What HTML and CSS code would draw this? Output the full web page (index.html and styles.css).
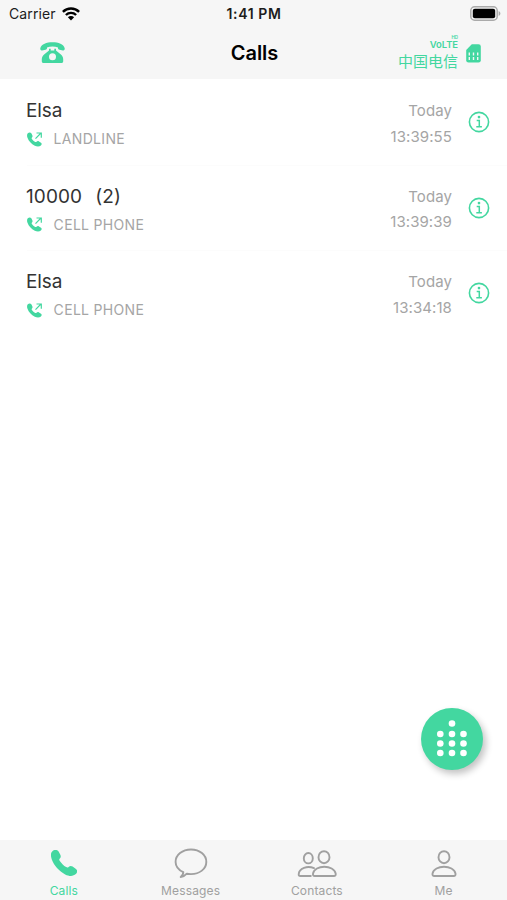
FILE: index.html
```html
<!DOCTYPE html>
<html lang="en">
<head>
<meta charset="utf-8">
<title>Calls</title>
<link rel="stylesheet" href="styles.css">
</head>
<body>
<svg class="defs" width="0" height="0" aria-hidden="true">
  <symbol id="handset" viewBox="0 0 26 26">
    <path d="M1.200 1.400C3-.3 6-.4 7.600 1.500L9.200 4.400C10.100 6.300 9.900 7.700 8.600 8.800C8 9.400 8.200 10.100 8.800 11C10.700 13.600 12.700 15.600 15.100 17.100C16.100 17.700 16.900 17.700 17.600 17C18.800 15.900 20.200 15.800 21.600 16.600L25 19C26.700 20.300 26.400 22.500 24.800 24.100C22.200 26.500 18.200 26.400 14.200 24.400C8 21 3.100 15.900.8 9.600C-.4 6-.5 3.100 1.200 1.400Z"/>
  </symbol>
  <symbol id="outgoing" viewBox="0 0 16 15">
    <path d="M.8 1.300C2 .2 3.700.3 4.500 1.500L5.300 3.200C5.800 4.300 5.500 5.100 4.800 5.800C4.500 6.100 4.600 6.500 4.900 7C5.800 8.300 6.900 9.200 8.200 9.900C8.700 10.200 9.100 10.100 9.500 9.700C10.200 9 11.200 8.900 12 9.400L14 10.700C15 11.400 14.800 12.600 13.900 13.400C12.400 14.900 10 14.800 7.800 13.700C4.300 11.900 1.700 9 .5 5.700C-.1 4-.2 2.300.8 1.300Z"/>
    <path d="M8.500 6.600 14 1M9.500 1h4.800v4.700" fill="none" stroke="currentColor" stroke-width="1.200"/>
  </symbol>
  <symbol id="info" viewBox="0 0 22 22">
    <circle cx="11" cy="11" r="9.600" fill="none" stroke="currentColor" stroke-width="1.600"/>
    <circle cx="11" cy="6.100" r="1.350"/>
    <path d="M8.700 9.600h2.600v6M8.300 15.800h5.600" fill="none" stroke="currentColor" stroke-width="1.500"/>
  </symbol>
</svg>

<header class="top">
  <div class="status">
    <div class="carrier">Carrier
      <svg width="18" height="14" viewBox="0 0 18 14"><g fill="none" stroke="#000" stroke-width="2.400"><path d="M.9 4.900a11.500 11.500 0 0 1 16.200 0"/><path d="M3.900 8a7.200 7.200 0 0 1 10.200 0"/></g><path d="M5.900 10.200a4.400 4.400 0 0 1 6.200 0L9 13.400Z"/></svg>
    </div>
    <div class="clock">1:41 PM</div>
    <svg class="battery" width="31" height="15" viewBox="0 0 31 15"><rect x=".8" y=".8" width="26.400" height="13.400" rx="3.800" fill="#f7f7f7" stroke="#aaa" stroke-width="1.500"/><rect x="2.800" y="2.800" width="22.400" height="9.400" rx="2" fill="#000"/><path d="M28.600 5v5c1-.4 1.800-1.400 1.800-2.500S29.600 5.400 28.600 5Z" fill="#aaa"/></svg>
  </div>
  <div class="nav">
    <svg class="phone" width="25" height="22" viewBox="0 0 25 22"><path d="M.3 6.200C1.400 2.300 6.500.3 12.500.3S23.600 2.300 24.700 6.200C24.900 7.600 24.300 8.500 23 8.400L19.500 7.700C18.300 7.400 17.900 6.800 18 5.400C14.700 4.300 10.300 4.300 7 5.400C7.100 6.800 6.700 7.400 5.500 7.700L2 8.400C.7 8.500.1 7.600.3 6.200Z"/><path fill-rule="evenodd" d="M9 6.800h1.700v1.600h3.600V6.800H16v1.600l4.900 4.200c1.500 1.400 2.300 3 2.300 5v1.600c0 1.200-.7 1.800-1.800 1.800H3.600c-1.100 0-1.800-.6-1.800-1.800v-1.600c0-2 .8-3.600 2.300-5L9 8.400ZM12.500 11.300a3.500 3.500 0 1 0 0 7 3.500 3.500 0 0 0 0-7Z"/></svg>
    <h1>Calls</h1>
    <div class="sim">
      <div class="network">
        <div class="hd">HD</div>
        <div class="volte">VoLTE</div>
        <div class="operator">中国电信</div>
      </div>
      <svg width="15" height="19" viewBox="0 0 15 19"><path d="M5.800.3H12.500Q14.800.3 14.800 2.600V16.200Q14.800 18.500 12.500 18.500H2.500Q.2 18.500.2 16.200V5.900Z"/><path d="M3.300 8.500v3M7.500 8.500v3M11.700 8.500v3M3.300 13v3M7.500 13v3M11.700 13v3" stroke="#f6f6f6" stroke-width="1.400"/></svg>
    </div>
  </div>
</header>

<main>
  <article class="call">
    <div class="who"><div class="name">Elsa</div><div class="kind"><svg width="16" height="15"><use href="#outgoing"/></svg><span>LANDLINE</span></div></div>
    <div class="when"><div class="day">Today</div><div class="time">13:39:55</div></div>
    <svg class="info" width="22" height="22"><use href="#info"/></svg>
  </article>
  <article class="call">
    <div class="who"><div class="name number">10000<span class="count">(2)</span></div><div class="kind"><svg width="16" height="15"><use href="#outgoing"/></svg><span>CELL PHONE</span></div></div>
    <div class="when"><div class="day">Today</div><div class="time">13:39:39</div></div>
    <svg class="info" width="22" height="22"><use href="#info"/></svg>
  </article>
  <article class="call">
    <div class="who"><div class="name">Elsa</div><div class="kind"><svg width="16" height="15"><use href="#outgoing"/></svg><span>CELL PHONE</span></div></div>
    <div class="when"><div class="day">Today</div><div class="time">13:34:18</div></div>
    <svg class="info" width="22" height="22"><use href="#info"/></svg>
  </article>
</main>

<button class="dial" aria-label="Keypad">
  <svg width="62" height="62" viewBox="0 0 62 62"><circle cx="31" cy="15.500" r="3.300"/><circle cx="19.300" cy="26" r="3.300"/><circle cx="31" cy="26" r="3.300"/><circle cx="42.500" cy="26" r="3.300"/><circle cx="19.300" cy="35.500" r="3.300"/><circle cx="31" cy="35.500" r="3.300"/><circle cx="42.500" cy="35.500" r="3.300"/><circle cx="19.300" cy="45" r="3.300"/><circle cx="31" cy="45" r="3.300"/><circle cx="42.500" cy="45" r="3.300"/></svg>
</button>

<nav class="tabs">
  <div class="tab active"><svg width="26" height="26"><use href="#handset"/></svg><span>Calls</span></div>
  <div class="tab messages"><svg class="line" width="34" height="31" viewBox="0 0 34 31"><path d="M9.300 24.100C4.600 21.900 1.600 18.200 1.600 13.900C1.600 6.900 8.300 1.500 17 1.500S32.300 6.900 32.300 13.900S25.600 26.100 17 26.100C15.500 26.100 14.100 26 12.800 25.700C11 27.700 9 28.900 6.700 29C8.600 27.700 9.300 26 9.300 24.100Z"/></svg><span>Messages</span></div>
  <div class="tab contacts"><svg class="line" width="40" height="28" viewBox="0 0 40 28"><ellipse cx="11.300" cy="8.200" rx="4.500" ry="5.200"/><path d="M17 18.200C10.500 15.200 2 18.200 1.700 24.200Q1.600 26 3.300 26H13.800"/><ellipse cx="27" cy="7.200" rx="5.500" ry="6"/><path d="M16 23.700C17.500 14.500 37 14.500 38.700 23.700Q39 26 36.900 26H17.700Q15.700 26 16 23.700Z"/></svg><span>Contacts</span></div>
  <div class="tab me"><svg class="line" width="26" height="28" viewBox="0 0 26 28"><ellipse cx="13" cy="7.200" rx="5.500" ry="6"/><path d="M1.500 23.700C3 14.500 23 14.500 24.500 23.700Q24.800 26 22.700 26H3.300Q1.200 26 1.500 23.700Z"/></svg><span>Me</span></div>
</nav>
</body>
</html>
```

FILE: styles.css
```css
* { box-sizing: border-box; }
body {
  margin: 0;
  height: 900px;
  display: flex;
  flex-direction: column;
  background: #fff;
  overflow: hidden;
  font-family: Inter, "Noto Sans CJK SC", sans-serif;
  color: #333;
}
svg { display: block; flex: none; fill: currentColor; }
.defs { position: absolute; }

.top { height: 79px; background: #f6f6f6; }
.status {
  height: 27px;
  display: grid;
  grid-template-columns: 1fr auto 1fr;
  align-items: center;
  padding: 0 6px 0 9px;
  font-size: 14px;
  color: #1c1c1c;
}
.carrier { display: flex; align-items: center; gap: 6px; letter-spacing: .1px; }
.carrier svg { fill: #000; }
.clock { margin-left: -2px; font-weight: 600; letter-spacing: .6px; }
.battery { justify-self: end; }
.nav {
  height: 52px;
  display: grid;
  grid-template-columns: 1fr auto 1fr;
  align-items: center;
  padding: 0 26px 0 40px;
  color: #43d7a0;
}
.nav h1 {
  margin: 0 0 0 -12px;
  font-size: 20px;
  line-height: 52px;
  font-weight: 600;
  letter-spacing: 0;
  color: #000;
}
.sim { display: flex; justify-content: flex-end; align-items: center; gap: 8px; }
.network { display: flex; flex-direction: column; align-items: flex-end; }
.hd { font-size: 4.500px; line-height: 4px; font-weight: 600; }
.volte { font-size: 9.500px; line-height: 10px; font-weight: 600; letter-spacing: -.1px; }
.operator { margin-top: 1px; font: 15px/20px "Noto Sans CJK SC", sans-serif; }

main { flex: 1; }
.call {
  height: 85.500px;
  display: flex;
  padding: 20px 16px 0 26px;
  color: #a5a5a5;
}
.call + .call { background: linear-gradient(#fcfcfc, #fcfcfc) 27px 0 / 100% 1px no-repeat; }
.who { flex: 1; }
.name { height: 24px; font-size: 19px; line-height: 24px; color: #333; letter-spacing: -.1px; }
.number { letter-spacing: .1px; }
.count { margin-left: 13px; }
.kind { display: flex; align-items: center; gap: 11px; margin: 7px 0 0 .6px; font-size: 14px; line-height: 18px; letter-spacing: .32px; }
.kind svg, .info { color: #43d7a0; }
.when { text-align: right; font-size: 15px; line-height: 24px; letter-spacing: .08px; }
.time { margin-top: 1.500px; }
.info { margin: 12px 1px 0 16px; }

.dial {
  position: absolute;
  left: 421px;
  top: 708px;
  width: 62px;
  height: 62px;
  padding: 0;
  border: 0;
  border-radius: 50%;
  background: #43d7a0;
  color: #fff;
  box-shadow: 3px 4px 7px rgba(0, 0, 0, .24);
}

.tabs {
  height: 60px;
  display: grid;
  grid-template-columns: repeat(4, 1fr);
  background: #f6f6f6;
  color: #a0a0a0;
}
.tab { display: flex; flex-direction: column; justify-content: space-between; align-items: center; padding: 10px 0 1px; font-size: 12px; line-height: 16px; letter-spacing: .15px; }
.active { color: #43d7a0; padding-left: 1px; }
.messages { padding-top: 8px; padding-left: 1px; }
.line { fill: none; stroke: currentColor; stroke-width: 1.900; stroke-linecap: round; stroke-linejoin: round; }
```
